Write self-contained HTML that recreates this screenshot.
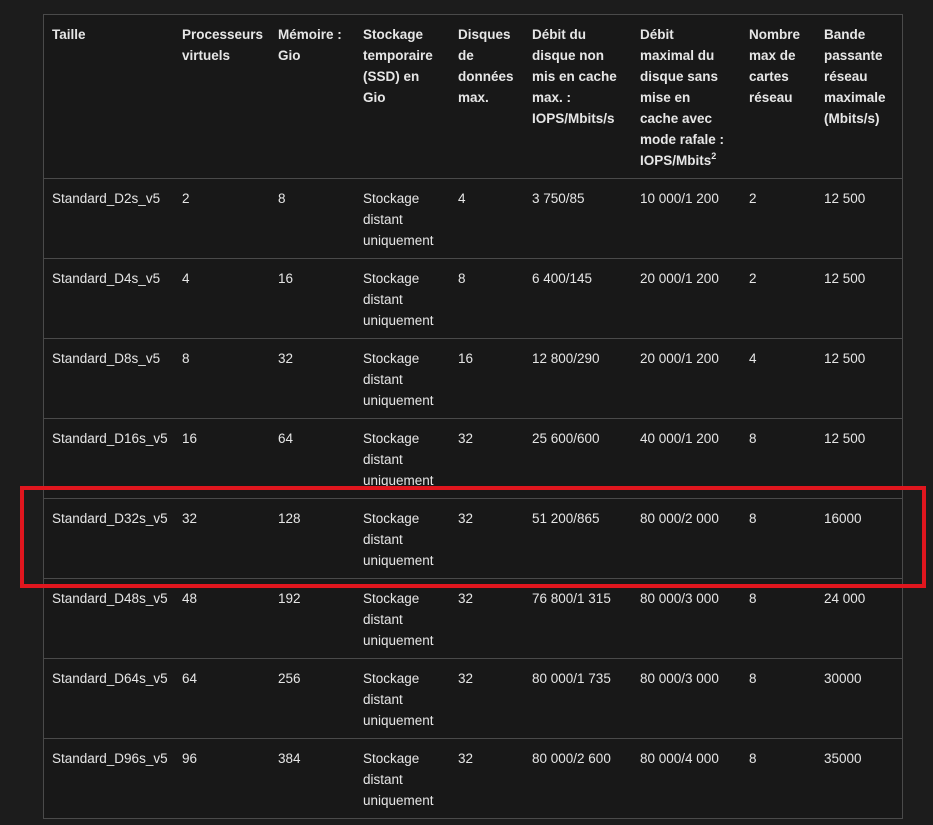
<!DOCTYPE html>
<html><head><meta charset="utf-8"><style>
html,body{margin:0;padding:0;background:#1c1c1c;width:933px;height:825px;overflow:hidden}
body{position:relative;font-family:"Liberation Sans",sans-serif;font-size:13.5px;line-height:21px;color:#e6e6e6}
#t{position:absolute;left:43px;top:14px;width:858px;height:803px;border:1px solid #4a4a4a;background:#181818}
.h{position:absolute;left:43px;width:859px;height:1px;background:#4a4a4a}
.c{position:absolute;white-space:pre}
.b{font-weight:bold}
#red{position:absolute;left:20px;top:486px;width:898px;height:94px;border:4px solid #e0161e}
sup{font-size:9px;line-height:0;vertical-align:6px}
</style></head><body>
<div id="t"></div>
<div class="h" style="top:178px"></div>
<div class="h" style="top:258px"></div>
<div class="h" style="top:338px"></div>
<div class="h" style="top:418px"></div>
<div class="h" style="top:498px"></div>
<div class="h" style="top:578px"></div>
<div class="h" style="top:658px"></div>
<div class="h" style="top:738px"></div>

<div class="c b" style="left:52px;top:24px">Taille</div>
<div class="c b" style="left:182px;top:24px">Processeurs
virtuels</div>
<div class="c b" style="left:278px;top:24px">Mémoire :
Gio</div>
<div class="c b" style="left:363px;top:24px">Stockage
temporaire
(SSD) en
Gio</div>
<div class="c b" style="left:458px;top:24px">Disques
de
données
max.</div>
<div class="c b" style="left:532px;top:24px">Débit du
disque non
mis en cache
max. :
IOPS/Mbits/s</div>
<div class="c b" style="left:640px;top:24px">Débit
maximal du
disque sans
mise en
cache avec
mode rafale :
IOPS/Mbits<sup>2</sup></div>
<div class="c b" style="left:749px;top:24px">Nombre
max de
cartes
réseau</div>
<div class="c b" style="left:824px;top:24px">Bande
passante
réseau
maximale
(Mbits/s)</div>

<div class="c" style="left:52px;top:188px">Standard_D2s_v5</div><div class="c" style="left:182px;top:188px">2</div><div class="c" style="left:278px;top:188px">8</div><div class="c" style="left:363px;top:188px">Stockage
distant
uniquement</div><div class="c" style="left:458px;top:188px">4</div><div class="c" style="left:532px;top:188px">3 750/85</div><div class="c" style="left:640px;top:188px">10 000/1 200</div><div class="c" style="left:749px;top:188px">2</div><div class="c" style="left:824px;top:188px">12 500</div>

<div class="c" style="left:52px;top:268px">Standard_D4s_v5</div><div class="c" style="left:182px;top:268px">4</div><div class="c" style="left:278px;top:268px">16</div><div class="c" style="left:363px;top:268px">Stockage
distant
uniquement</div><div class="c" style="left:458px;top:268px">8</div><div class="c" style="left:532px;top:268px">6 400/145</div><div class="c" style="left:640px;top:268px">20 000/1 200</div><div class="c" style="left:749px;top:268px">2</div><div class="c" style="left:824px;top:268px">12 500</div>

<div class="c" style="left:52px;top:348px">Standard_D8s_v5</div><div class="c" style="left:182px;top:348px">8</div><div class="c" style="left:278px;top:348px">32</div><div class="c" style="left:363px;top:348px">Stockage
distant
uniquement</div><div class="c" style="left:458px;top:348px">16</div><div class="c" style="left:532px;top:348px">12 800/290</div><div class="c" style="left:640px;top:348px">20 000/1 200</div><div class="c" style="left:749px;top:348px">4</div><div class="c" style="left:824px;top:348px">12 500</div>

<div class="c" style="left:52px;top:428px">Standard_D16s_v5</div><div class="c" style="left:182px;top:428px">16</div><div class="c" style="left:278px;top:428px">64</div><div class="c" style="left:363px;top:428px;height:60px;overflow:hidden">Stockage
distant
uniquement</div><div class="c" style="left:458px;top:428px">32</div><div class="c" style="left:532px;top:428px">25 600/600</div><div class="c" style="left:640px;top:428px">40 000/1 200</div><div class="c" style="left:749px;top:428px">8</div><div class="c" style="left:824px;top:428px">12 500</div>

<div class="c" style="left:52px;top:508px">Standard_D32s_v5</div><div class="c" style="left:182px;top:508px">32</div><div class="c" style="left:278px;top:508px">128</div><div class="c" style="left:363px;top:508px">Stockage
distant
uniquement</div><div class="c" style="left:458px;top:508px">32</div><div class="c" style="left:532px;top:508px">51 200/865</div><div class="c" style="left:640px;top:508px">80 000/2 000</div><div class="c" style="left:749px;top:508px">8</div><div class="c" style="left:824px;top:508px">16000</div>

<div class="c" style="left:52px;top:588px">Standard_D48s_v5</div><div class="c" style="left:182px;top:588px">48</div><div class="c" style="left:278px;top:588px">192</div><div class="c" style="left:363px;top:588px">Stockage
distant
uniquement</div><div class="c" style="left:458px;top:588px">32</div><div class="c" style="left:532px;top:588px">76 800/1 315</div><div class="c" style="left:640px;top:588px">80 000/3 000</div><div class="c" style="left:749px;top:588px">8</div><div class="c" style="left:824px;top:588px">24 000</div>

<div class="c" style="left:52px;top:668px">Standard_D64s_v5</div><div class="c" style="left:182px;top:668px">64</div><div class="c" style="left:278px;top:668px">256</div><div class="c" style="left:363px;top:668px">Stockage
distant
uniquement</div><div class="c" style="left:458px;top:668px">32</div><div class="c" style="left:532px;top:668px">80 000/1 735</div><div class="c" style="left:640px;top:668px">80 000/3 000</div><div class="c" style="left:749px;top:668px">8</div><div class="c" style="left:824px;top:668px">30000</div>

<div class="c" style="left:52px;top:748px">Standard_D96s_v5</div><div class="c" style="left:182px;top:748px">96</div><div class="c" style="left:278px;top:748px">384</div><div class="c" style="left:363px;top:748px">Stockage
distant
uniquement</div><div class="c" style="left:458px;top:748px">32</div><div class="c" style="left:532px;top:748px">80 000/2 600</div><div class="c" style="left:640px;top:748px">80 000/4 000</div><div class="c" style="left:749px;top:748px">8</div><div class="c" style="left:824px;top:748px">35000</div>

<div id="red"></div>
</body></html>
